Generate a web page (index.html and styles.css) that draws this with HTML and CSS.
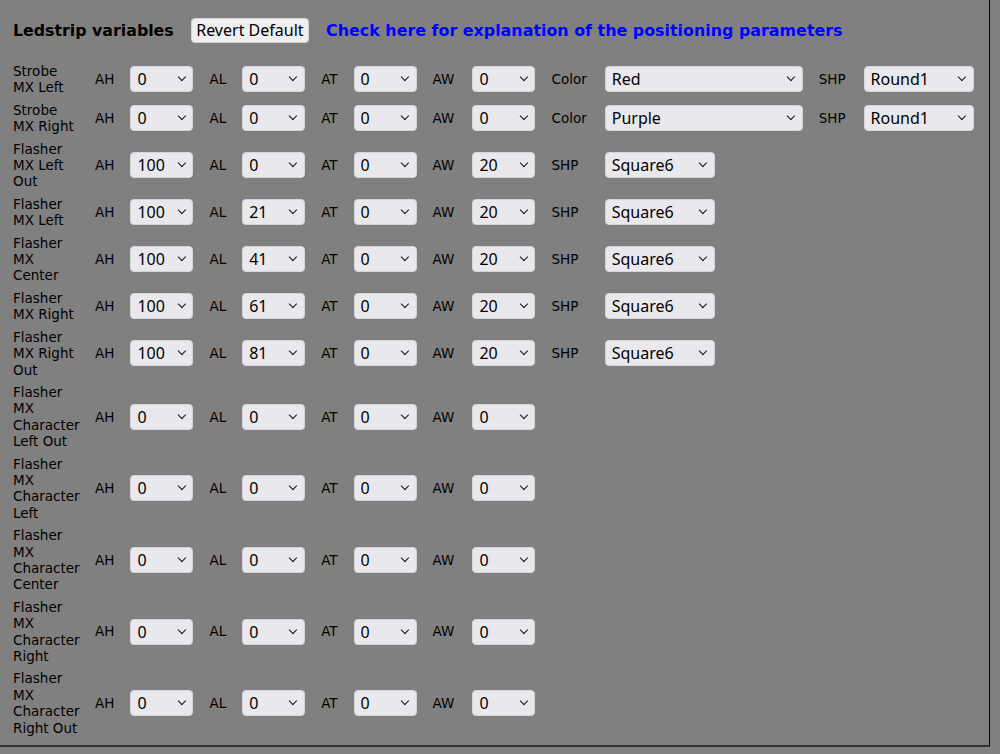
FILE: index.html
```html
<!DOCTYPE html>
<html>
<head>
<meta charset="utf-8">
<title>Ledstrip variables</title>
<link rel="stylesheet" href="styles.css">
</head>
<body>
<div class="panel">
  <div class="head">
    <span class="title">Ledstrip variables</span>
    <button class="btn" type="button">Revert Default</button>
    <a class="link" href="#">Check here for explanation of the positioning parameters</a>
  </div>
  <table class="grid">
    <tr>
      <td class="name">Strobe MX Left</td>
      <td class="k">AH</td><td class="v"><span class="sel"><select class="n"><option>0</option></select></span></td>
      <td class="k">AL</td><td class="v"><span class="sel"><select class="n"><option>0</option></select></span></td>
      <td class="k">AT</td><td class="v"><span class="sel"><select class="n"><option>0</option></select></span></td>
      <td class="k w">AW</td><td class="v"><span class="sel"><select class="n"><option>0</option></select></span></td>
      <td class="k w">Color</td><td class="v"><span class="sel"><select class="c"><option>Red</option></select></span></td>
      <td class="k w">SHP</td><td class="v"><span class="sel"><select class="s"><option>Round1</option></select></span></td>
    </tr>
    <tr>
      <td class="name">Strobe MX Right</td>
      <td class="k">AH</td><td class="v"><span class="sel"><select class="n"><option>0</option></select></span></td>
      <td class="k">AL</td><td class="v"><span class="sel"><select class="n"><option>0</option></select></span></td>
      <td class="k">AT</td><td class="v"><span class="sel"><select class="n"><option>0</option></select></span></td>
      <td class="k w">AW</td><td class="v"><span class="sel"><select class="n"><option>0</option></select></span></td>
      <td class="k w">Color</td><td class="v"><span class="sel"><select class="c"><option>Purple</option></select></span></td>
      <td class="k w">SHP</td><td class="v"><span class="sel"><select class="s"><option>Round1</option></select></span></td>
    </tr>
    <tr>
      <td class="name">Flasher MX Left Out</td>
      <td class="k">AH</td><td class="v"><span class="sel"><select class="n"><option>100</option></select></span></td>
      <td class="k">AL</td><td class="v"><span class="sel"><select class="n"><option>0</option></select></span></td>
      <td class="k">AT</td><td class="v"><span class="sel"><select class="n"><option>0</option></select></span></td>
      <td class="k w">AW</td><td class="v"><span class="sel"><select class="n"><option>20</option></select></span></td>
      <td class="k w">SHP</td><td class="v"><span class="sel"><select class="s"><option>Square6</option></select></span></td>
    </tr>
    <tr>
      <td class="name">Flasher MX Left</td>
      <td class="k">AH</td><td class="v"><span class="sel"><select class="n"><option>100</option></select></span></td>
      <td class="k">AL</td><td class="v"><span class="sel"><select class="n"><option>21</option></select></span></td>
      <td class="k">AT</td><td class="v"><span class="sel"><select class="n"><option>0</option></select></span></td>
      <td class="k w">AW</td><td class="v"><span class="sel"><select class="n"><option>20</option></select></span></td>
      <td class="k w">SHP</td><td class="v"><span class="sel"><select class="s"><option>Square6</option></select></span></td>
    </tr>
    <tr>
      <td class="name">Flasher MX Center</td>
      <td class="k">AH</td><td class="v"><span class="sel"><select class="n"><option>100</option></select></span></td>
      <td class="k">AL</td><td class="v"><span class="sel"><select class="n"><option>41</option></select></span></td>
      <td class="k">AT</td><td class="v"><span class="sel"><select class="n"><option>0</option></select></span></td>
      <td class="k w">AW</td><td class="v"><span class="sel"><select class="n"><option>20</option></select></span></td>
      <td class="k w">SHP</td><td class="v"><span class="sel"><select class="s"><option>Square6</option></select></span></td>
    </tr>
    <tr>
      <td class="name">Flasher MX Right</td>
      <td class="k">AH</td><td class="v"><span class="sel"><select class="n"><option>100</option></select></span></td>
      <td class="k">AL</td><td class="v"><span class="sel"><select class="n"><option>61</option></select></span></td>
      <td class="k">AT</td><td class="v"><span class="sel"><select class="n"><option>0</option></select></span></td>
      <td class="k w">AW</td><td class="v"><span class="sel"><select class="n"><option>20</option></select></span></td>
      <td class="k w">SHP</td><td class="v"><span class="sel"><select class="s"><option>Square6</option></select></span></td>
    </tr>
    <tr>
      <td class="name">Flasher MX Right Out</td>
      <td class="k">AH</td><td class="v"><span class="sel"><select class="n"><option>100</option></select></span></td>
      <td class="k">AL</td><td class="v"><span class="sel"><select class="n"><option>81</option></select></span></td>
      <td class="k">AT</td><td class="v"><span class="sel"><select class="n"><option>0</option></select></span></td>
      <td class="k w">AW</td><td class="v"><span class="sel"><select class="n"><option>20</option></select></span></td>
      <td class="k w">SHP</td><td class="v"><span class="sel"><select class="s"><option>Square6</option></select></span></td>
    </tr>
    <tr>
      <td class="name">Flasher MX Character Left Out</td>
      <td class="k">AH</td><td class="v"><span class="sel"><select class="n"><option>0</option></select></span></td>
      <td class="k">AL</td><td class="v"><span class="sel"><select class="n"><option>0</option></select></span></td>
      <td class="k">AT</td><td class="v"><span class="sel"><select class="n"><option>0</option></select></span></td>
      <td class="k w">AW</td><td class="v"><span class="sel"><select class="n"><option>0</option></select></span></td>
    </tr>
    <tr>
      <td class="name">Flasher MX Character Left</td>
      <td class="k">AH</td><td class="v"><span class="sel"><select class="n"><option>0</option></select></span></td>
      <td class="k">AL</td><td class="v"><span class="sel"><select class="n"><option>0</option></select></span></td>
      <td class="k">AT</td><td class="v"><span class="sel"><select class="n"><option>0</option></select></span></td>
      <td class="k w">AW</td><td class="v"><span class="sel"><select class="n"><option>0</option></select></span></td>
    </tr>
    <tr>
      <td class="name">Flasher MX Character Center</td>
      <td class="k">AH</td><td class="v"><span class="sel"><select class="n"><option>0</option></select></span></td>
      <td class="k">AL</td><td class="v"><span class="sel"><select class="n"><option>0</option></select></span></td>
      <td class="k">AT</td><td class="v"><span class="sel"><select class="n"><option>0</option></select></span></td>
      <td class="k w">AW</td><td class="v"><span class="sel"><select class="n"><option>0</option></select></span></td>
    </tr>
    <tr>
      <td class="name">Flasher MX Character Right</td>
      <td class="k">AH</td><td class="v"><span class="sel"><select class="n"><option>0</option></select></span></td>
      <td class="k">AL</td><td class="v"><span class="sel"><select class="n"><option>0</option></select></span></td>
      <td class="k">AT</td><td class="v"><span class="sel"><select class="n"><option>0</option></select></span></td>
      <td class="k w">AW</td><td class="v"><span class="sel"><select class="n"><option>0</option></select></span></td>
    </tr>
    <tr>
      <td class="name">Flasher MX Character Right Out</td>
      <td class="k">AH</td><td class="v"><span class="sel"><select class="n"><option>0</option></select></span></td>
      <td class="k">AL</td><td class="v"><span class="sel"><select class="n"><option>0</option></select></span></td>
      <td class="k">AT</td><td class="v"><span class="sel"><select class="n"><option>0</option></select></span></td>
      <td class="k w">AW</td><td class="v"><span class="sel"><select class="n"><option>0</option></select></span></td>
    </tr>
  </table>
</div>
</body>
</html>
```
FILE: styles.css
```css
html, body {
  margin: 0;
  padding: 0;
  background: #808080;
}

body {
  font-family: "DejaVu Sans", Verdana, sans-serif;
  color: #000;
}

.panel {
  width: 990px;
  box-sizing: border-box;
  border-right: 1px solid #000;
  border-bottom: 2px solid #333;
  padding: 18px 0 6px 5px;
}

.head {
  display: flex;
  align-items: center;
  gap: 17px;
  padding-left: 8px;
  height: 25px;
}

.title {
  font-weight: bold;
  font-size: 15.8px;
}

.btn {
  font-family: "Noto Sans", "Open Sans", sans-serif;
  font-size: 16px;
  height: 25px;
  line-height: 23px;
  padding: 0 4.5px;
  background: #efeff2;
  border: 1px solid #d4d4d8;
  border-radius: 4px;
  color: #000;
}

.link {
  font-weight: bold;
  font-size: 15.9px;
  color: #0000ff;
  text-decoration: none;
}

.grid {
  margin-top: 17px;
  border-collapse: separate;
  border-spacing: 0;
  font-size: 13.5px;
  line-height: 16.4px;
}

.grid td {
  padding: 3px 8px;
  vertical-align: middle;
  white-space: nowrap;
}

.grid td.name {
  width: 67px;
  padding-right: 7px;
  white-space: normal;
}

.grid td.w {
  padding-right: 10px;
}

.sel {
  position: relative;
  display: inline-block;
  vertical-align: middle;
}

.sel::after {
  content: "";
  position: absolute;
  right: 9px;
  top: 50%;
  width: 4.8px;
  height: 4.8px;
  margin-top: -5px;
  border-right: 1.8px solid #151515;
  border-bottom: 1.8px solid #151515;
  transform: rotate(45deg);
  pointer-events: none;
}

.sel select {
  display: block;
  -webkit-appearance: none;
  appearance: none;
  height: 26px;
  box-sizing: border-box;
  margin: 0;
  padding: 0 6px;
  font-family: "Noto Sans", "Open Sans", sans-serif;
  font-size: 16px;
  color: #000;
  background: #e9e9ed;
  border: 1px solid #d6d6da;
  border-radius: 4px;
}

.sel select.n { width: 63px; }
.sel select.c { width: 198px; }
.sel select.s { width: 110px; }
```
